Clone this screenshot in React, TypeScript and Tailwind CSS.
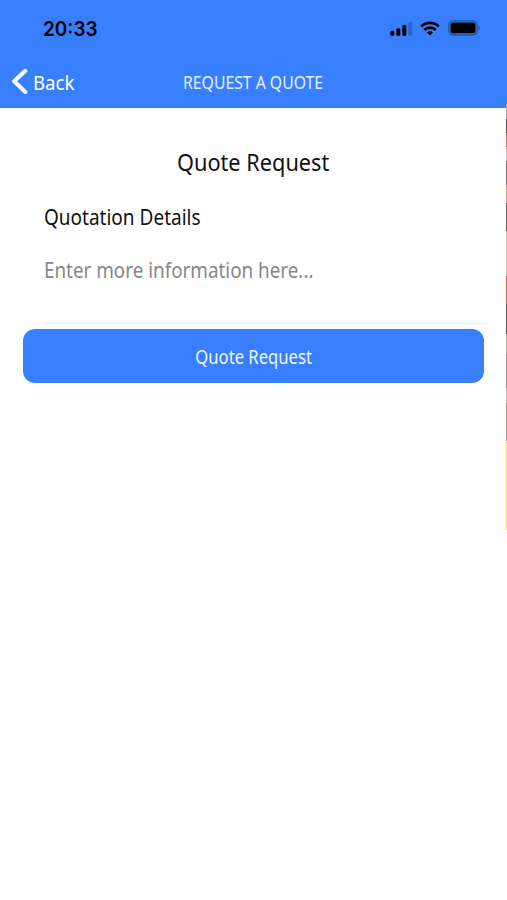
interface EdgeSlice {
  id: string
  className: string
}

// Sliver of the previous screen that stays visible along the right edge
const edgeSlices: EdgeSlice[] = [
  { id: "top", className: "h-[15px] bg-[#a3a6ad]" },
  { id: "dark", className: "h-[14px] bg-[#4e474c]" },
  { id: "red", className: "h-[14px] bg-[#b97873]" },
  { id: "light", className: "h-[14px] bg-[#c9c6c5]" },
  { id: "gray", className: "h-[24px] bg-[#77716f]" },
  { id: "skin", className: "h-[18px] bg-[#c7a99c]" },
  { id: "shade", className: "h-[28px] bg-[#5f5c5c]" },
  { id: "beige", className: "h-[45px] bg-[#cbc5bd]" },
  { id: "coral", className: "h-[28px] bg-[#c2675c]" },
  { id: "slate", className: "h-[30px] bg-[#514e54]" },
  { id: "stone", className: "h-[20px] bg-[#b5b2ae]" },
  { id: "ash", className: "h-[34px] bg-[#96918f]" },
  { id: "pale", className: "h-[15px] bg-[#c4c1be]" },
  { id: "mid", className: "h-[38px] bg-[#a39896]" },
  { id: "yellow", className: "h-[89px] bg-[#f3df72]" },
]

function SignalIcon() {
  return (
    <svg width="23" height="15" viewBox="0 0 23 15" fill="#000">
      <rect x="0.3" y="9.7" width="4" height="5" rx="1.2" />
      <rect x="6.3" y="7.3" width="4" height="7.4" rx="1.2" />
      <rect x="12.3" y="4.1" width="4" height="10.6" rx="1.2" />
      <rect x="18.3" y="0.9" width="4" height="13.8" rx="1.2" fillOpacity="0.22" />
    </svg>
  )
}

function WifiIcon() {
  return (
    <svg width="20" height="15" viewBox="0 0 20 15" fill="none" stroke="#000" strokeWidth="2.7">
      <path d="M1.2 5.6C6 .7 14 .7 18.8 5.6" />
      <path d="M4.3 9C7.5 5.9 12.5 5.9 15.7 9" />
      <path d="M10 14.6 6.9 11.5C8.6 9.9 11.4 9.9 13.1 11.5Z" fill="#000" stroke="none" />
    </svg>
  )
}

function BatteryIcon() {
  return (
    <svg width="33" height="16" viewBox="0 0 33 16">
      <rect x="0.8" y="0.8" width="28.4" height="14.2" rx="4.4" fill="none" stroke="#000" strokeOpacity="0.38" strokeWidth="1.3" />
      <rect x="2.5" y="2.6" width="25" height="10.7" rx="2.6" fill="#000" />
      <path d="M30.5 5.5C32.2 6.3 32.2 9.5 30.5 10.3Z" fill="#000" fillOpacity="0.45" />
    </svg>
  )
}

export default function App() {
  return (
    <div className="relative h-[900px] w-[507px] overflow-hidden bg-white font-['Noto_Sans',sans-serif]">
      <header className="h-[108px] bg-[#387fff]">
        <div className="flex h-14 items-center pl-[43px] pr-[26px]">
          <span className="origin-left scale-x-[.95] pt-0.5 font-['Inter',sans-serif] text-[20px] font-semibold leading-6 text-black">
            20:33
          </span>
          <div className="ml-auto flex items-center">
            <SignalIcon />
            <div className="ml-[7px]"><WifiIcon /></div>
            <div className="ml-2"><BatteryIcon /></div>
          </div>
        </div>
        <div className="grid h-[52px] grid-cols-[1fr_auto_1fr] items-center">
          <button className="flex items-center pl-[11px] text-white">
            <svg width="18" height="28" viewBox="0 0 18 28" fill="none" stroke="#fff" strokeWidth="4" strokeLinecap="round" strokeLinejoin="round">
              <path d="M14.3 2.8 3.2 13.3 14.3 24" />
            </svg>
            <span className="ml-1 origin-left scale-x-[.93] pt-px text-[20px] leading-7">Back</span>
          </button>
          <h1 className="scale-x-[.875] whitespace-nowrap pb-px pr-px text-[18px] leading-6 text-[#e3f0ff]">REQUEST A QUOTE</h1>
        </div>
      </header>

      <main className="pl-[23px] pr-[23px]">
        <h2 className="pt-[38px] text-center text-[24px] leading-8 text-[#111]">
          <span className="inline-block scale-x-[.905]">Quote Request</span>
        </h2>
        <form>
          <div className="ml-[21px] -mr-1 h-[146px] border-b border-[#ececee] pt-6">
            <label htmlFor="details" className="block w-max origin-left scale-x-[.905] text-[21px] leading-[30px] text-[#111]">
              Quotation Details
            </label>
            <textarea
              id="details"
              placeholder="Enter more information here..."
              className="mt-[23px] block h-[34px] w-[380px] origin-left scale-x-[.897] resize-none text-[21px] leading-[30px] outline-none placeholder:text-[#888]"
            />
          </div>
          <button type="button" className="mt-[5px] h-[54px] w-full rounded-xl bg-[#387fff] pt-0.5 text-[19px] text-[#eef6ff]">
            <span className="inline-block scale-x-[.875]">Quote Request</span>
          </button>
        </form>
      </main>

      <div className="absolute right-0 top-[104px] w-px">
        {edgeSlices.map((slice) => (
          <div key={slice.id} className={slice.className} />
        ))}
      </div>
    </div>
  )
}
